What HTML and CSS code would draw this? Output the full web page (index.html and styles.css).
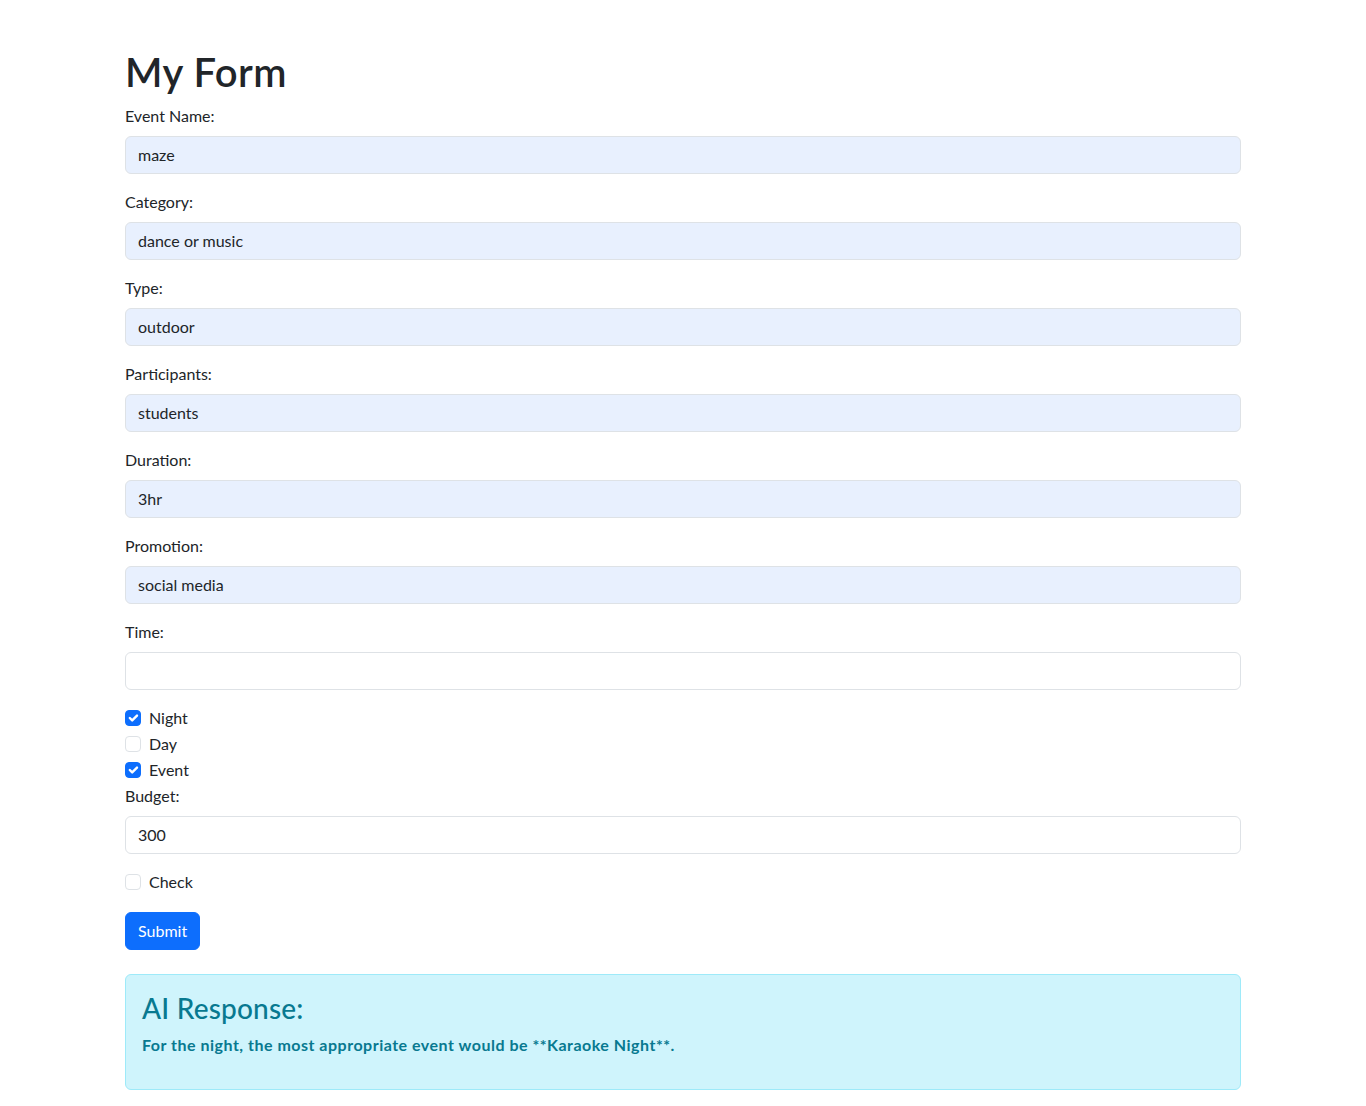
FILE: index.html
```html
<!DOCTYPE html>
<html lang="en">
<head>
<meta charset="utf-8">
<title>My Form</title>
<link rel="stylesheet" href="styles.css">
</head>
<body>
<div class="container">
  <h1 class="title">My Form</h1>
  <form class="form">
    <div class="field">
      <label class="label">Event Name:</label>
      <div class="input filled">maze</div>
    </div>
    <div class="field">
      <label class="label">Category:</label>
      <div class="input filled">dance or music</div>
    </div>
    <div class="field">
      <label class="label">Type:</label>
      <div class="input filled">outdoor</div>
    </div>
    <div class="field">
      <label class="label">Participants:</label>
      <div class="input filled">students</div>
    </div>
    <div class="field">
      <label class="label">Duration:</label>
      <div class="input filled">3hr</div>
    </div>
    <div class="field">
      <label class="label">Promotion:</label>
      <div class="input filled">social media</div>
    </div>
    <div class="field">
      <label class="label">Time:</label>
      <div class="input"></div>
    </div>
    <div class="check-row">
      <span class="box checked"><svg viewBox="0 0 20 20" width="16" height="16"><path d="M6 10l3 3l6-6" fill="none" stroke="#fff" stroke-width="3" stroke-linecap="round" stroke-linejoin="round"/></svg></span>
      <span class="check-label">Night</span>
    </div>
    <div class="check-row">
      <span class="box"></span>
      <span class="check-label">Day</span>
    </div>
    <div class="check-row">
      <span class="box checked"><svg viewBox="0 0 20 20" width="16" height="16"><path d="M6 10l3 3l6-6" fill="none" stroke="#fff" stroke-width="3" stroke-linecap="round" stroke-linejoin="round"/></svg></span>
      <span class="check-label">Event</span>
    </div>
    <div class="field">
      <label class="label">Budget:</label>
      <div class="input">300</div>
    </div>
    <div class="check-wrap">
      <div class="check-row">
        <span class="box"></span>
        <span class="check-label">Check</span>
      </div>
    </div>
    <button type="button" class="btn">Submit</button>
  </form>
  <div class="alert">
    <h3 class="alert-heading">AI Response:</h3>
    <p class="alert-text">For the night, the most appropriate event would be **Karaoke Night**.</p>
  </div>
</div>
</body>
</html>
```

FILE: styles.css
```css
* { box-sizing: border-box; }
html, body { margin: 0; padding: 0; }
body {
  font-family: "Lato", "Segoe UI", sans-serif;
  font-size: 16px;
  line-height: 1.5;
  color: #212529;
  background: #fff;
}
.container {
  max-width: 1140px;
  margin: 48px auto 0;
  padding: 0 12px 16px;
}
.title {
  font-size: 40px;
  font-weight: 600;
  line-height: 48px;
  height: 48px;
  margin: 0 0 8px;
  letter-spacing: 0.5px;
}
.form { display: block; }
.field { margin-bottom: 16px; }
.label {
  display: block;
  margin-bottom: 8px;
  line-height: 24px;
  height: 24px;
}
.input {
  height: 38px;
  padding: 6px 12px;
  border: 1px solid #dee2e6;
  border-radius: 6px;
  background: #fff;
  line-height: 24px;
  color: #212529;
}
.input.filled { background: #e8f0fe; }
.check-row {
  display: flex;
  align-items: flex-start;
  height: 24px;
  margin-bottom: 2px;
}
.box {
  width: 16px;
  height: 16px;
  margin-top: 4px;
  border: 1px solid #dee2e6;
  border-radius: 4px;
  background: #fff;
  display: flex;
  flex: none;
}
.box.checked {
  background: #0d6efd;
  border-color: #0d6efd;
}
.box svg { display: block; margin: -1px; }
.check-label { margin-left: 8px; line-height: 24px; }
.check-wrap { display: flow-root; margin-bottom: 16px; }
.btn {
  display: block;
  font-family: inherit;
  font-size: 16px;
  line-height: 24px;
  height: 38px;
  padding: 6px 12px;
  color: #fff;
  background: #0d6efd;
  border: 1px solid #0d6efd;
  border-radius: 6px;
}
.alert {
  margin-top: 24px;
  padding: 16px;
  border: 1px solid #9eeaf9;
  border-radius: 6px;
  background: #cff4fc;
  color: #087990;
}
.alert-heading {
  font-size: 28px;
  font-weight: 500;
  line-height: 34px;
  height: 34px;
  margin: 0 0 8px;
  color: inherit;
  letter-spacing: 0.2px;
}
.alert-text {
  margin: 0 0 16px;
  line-height: 24px;
  font-weight: 700;
  letter-spacing: 0.5px;
}
```
